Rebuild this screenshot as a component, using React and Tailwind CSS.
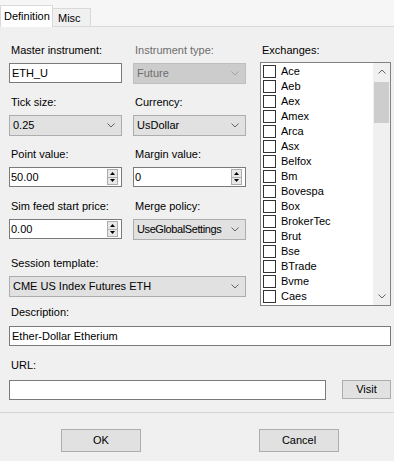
import React from "react";

const exchanges = [
  "Ace", "Aeb", "Aex", "Amex", "Arca", "Asx", "Belfox", "Bm",
  "Bovespa", "Box", "BrokerTec", "Brut", "Bse", "BTrade", "Bvme", "Caes",
];

function Chevron({ color = "#606060", up = false }) {
  return (
    <svg width="8" height="5" viewBox="0 0 8 5" className="shrink-0">
      <polyline
        points={up ? "0.5,4.5 4,1 7.5,4.5" : "0.5,0.5 4,4 7.5,0.5"}
        fill="none"
        stroke={color}
        strokeWidth="1"
      />
    </svg>
  );
}

function Label({ children, disabled }) {
  return (
    <div className={`h-[13px] pl-[2px] whitespace-nowrap ${disabled ? "text-[#6d6d6d]" : "text-black"}`}>
      {children}
    </div>
  );
}

function TextBox({ value, className = "" }) {
  return (
    <div className={`h-[20px] border border-[#7a7a7a] bg-white pl-[2px] flex items-center ${className}`}>
      {value}
    </div>
  );
}

function Combo({ value, disabled, tight, className = "" }) {
  return (
    <div
      className={`h-[21px] border flex items-center justify-between pl-[3px] pr-[6px] ${
        disabled
          ? "bg-[#cccccc] border-[#bfbfbf] text-[#6d6d6d]"
          : "bg-[#e1e1e1] border-[#adadad] text-black"
      } ${className}`}
    >
      <span className={`whitespace-nowrap ${tight ? "tracking-[-0.4px]" : ""}`}>{value}</span>
      <Chevron color={disabled ? "#a0a0a0" : "#606060"} />
    </div>
  );
}

function Spinner({ value }) {
  return (
    <div className="h-[20px] border border-[#7a7a7a] bg-white flex items-center justify-between pl-[1px] pr-[3px]">
      <span>{value}</span>
      <div className="flex flex-col w-[11px] h-[16px] border border-[#adadad] bg-[#e8e8e8]">
        <div className="flex-1 flex items-center justify-center border-b border-[#adadad]">
          <svg width="5" height="3" viewBox="0 0 5 3"><polygon points="2.5,0 5,3 0,3" fill="#000" /></svg>
        </div>
        <div className="flex-1 flex items-center justify-center">
          <svg width="5" height="3" viewBox="0 0 5 3"><polygon points="0,0 5,0 2.5,3" fill="#000" /></svg>
        </div>
      </div>
    </div>
  );
}

function Button({ children, className = "" }) {
  return (
    <div className={`border border-[#adadad] bg-[#e1e1e1] flex items-center justify-center ${className}`}>
      {children}
    </div>
  );
}

export default function App() {
  return (
    <div className="w-[394px] h-[461px] bg-[#f0f0f0] overflow-hidden text-[11px] leading-[13px] text-black font-['Liberation_Sans',Arial,sans-serif]">
      {/* tabs */}
      <div className="h-[27px] flex items-end border-b border-[#d9d9d9] bg-[#f6f6f6]">
        <div className="h-[22px] w-[53px] -mb-px bg-white border border-b-0 border-[#d9d9d9] pl-[3px] pt-[4px]">
          Definition
        </div>
        <div className="h-[18px] w-[38px] bg-[#f0f0f0] border border-l-0 border-b-0 border-[#d9d9d9] pl-[5px] pt-[3px]">
          Misc
        </div>
      </div>

      {/* tab page */}
      <div className="h-[386px] border-b border-[#d5d5d5]">
        <div className="flex">
          <div className="ml-[9px] w-[237px] mt-[17px]">
            <div className="grid grid-cols-2 gap-x-[11px]">
              <div className="h-[52px]">
                <Label>Master instrument:</Label>
                <TextBox value="ETH_U" className="mt-[6px] pl-[2px]" />
              </div>
              <div className="h-[52px]">
                <Label disabled>Instrument type:</Label>
                <Combo value="Future" disabled className="mt-[6px]" />
              </div>
              <div className="h-[52px]">
                <Label>Tick size:</Label>
                <Combo value="0.25" className="mt-[6px]" />
              </div>
              <div className="h-[52px]">
                <Label>Currency:</Label>
                <Combo value="UsDollar" className="mt-[6px]" />
              </div>
              <div className="h-[52px]">
                <Label>Point value:</Label>
                <div className="mt-[6px]"><Spinner value="50.00" /></div>
              </div>
              <div className="h-[52px]">
                <Label>Margin value:</Label>
                <div className="mt-[6px]"><Spinner value="0" /></div>
              </div>
              <div className="h-[52px]">
                <Label>Sim feed start price:</Label>
                <div className="mt-[6px]"><Spinner value="0.00" /></div>
              </div>
              <div className="h-[52px]">
                <Label>Merge policy:</Label>
                <Combo value="UseGlobalSettings" tight className="mt-[6px]" />
              </div>
            </div>
            <div className="mt-[5px]">
              <Label>Session template:</Label>
              <Combo value="CME US Index Futures ETH" className="mt-[6px]" />
            </div>
            <div className="mt-[9px]">
              <Label>Description:</Label>
            </div>
          </div>

          <div className="ml-[14px] w-[131px] mt-[17px]">
            <Label>Exchanges:</Label>
            <div className="mt-[5px] h-[244px] border border-[#828282] bg-white flex">
              <div className="flex-1 pt-[1px] pl-[2px]">
                {exchanges.map((name) => (
                  <div key={name} className="h-[15px] flex items-center">
                    <div className="w-[13px] h-[13px] border border-[#333333] bg-white" />
                    <span className="ml-[5px]">{name}</span>
                  </div>
                ))}
              </div>
              <div className="w-[17px] bg-[#f0f0f0] flex flex-col">
                <div className="h-[17px] flex items-center justify-center">
                  <Chevron up />
                </div>
                <div className="flex-1 px-[1px] pt-[2px]">
                  <div className="h-[41px] bg-[#cdcdcd]" />
                </div>
                <div className="h-[17px] flex items-center justify-center">
                  <Chevron />
                </div>
              </div>
            </div>
          </div>
        </div>

        <TextBox value="Ether-Dollar Etherium" className="mt-[7px] ml-[9px] w-[382px]" />

        <div className="mt-[13px] ml-[9px]">
          <Label>URL:</Label>
        </div>
        <div className="mt-[8px] ml-[9px] flex items-start">
          <TextBox value="" className="w-[317px]" />
          <Button className="ml-[16px] w-[49px] h-[19px]">Visit</Button>
        </div>
      </div>

      {/* dialog buttons */}
      <div className="flex mt-[16px]">
        <Button className="ml-[61px] w-[80px] h-[23px]">OK</Button>
        <Button className="ml-[118px] w-[80px] h-[23px]">Cancel</Button>
      </div>
    </div>
  );
}
